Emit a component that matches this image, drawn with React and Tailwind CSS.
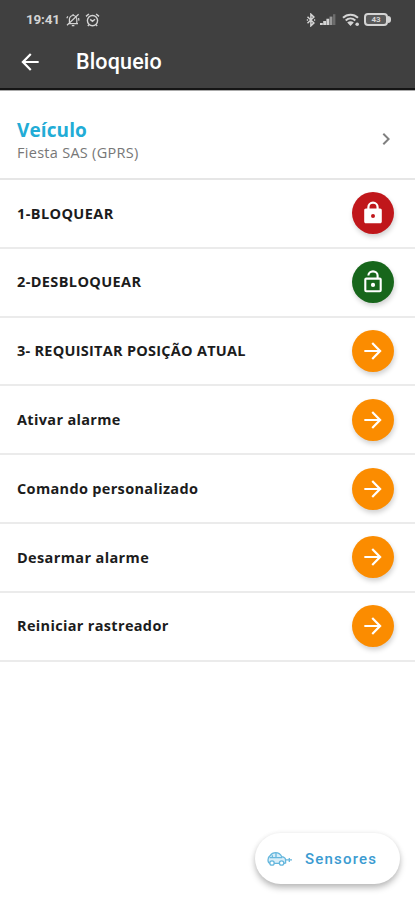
import { MdArrowBack, MdArrowForward, MdChevronRight } from 'react-icons/md'

const COMMANDS = [
  { label: '1-BLOQUEAR', type: 'lock', spacing: 'tracking-[0.4px]' },
  { label: '2-DESBLOQUEAR', type: 'unlock', spacing: 'tracking-[0.38px]' },
  { label: '3- REQUISITAR POSIÇÃO ATUAL', type: 'send', spacing: 'tracking-[0.26px]' },
  { label: 'Ativar alarme', type: 'send', spacing: 'tracking-[0.33px]' },
  { label: 'Comando personalizado', type: 'send', spacing: 'tracking-[0.33px]' },
  { label: 'Desarmar alarme', type: 'send', spacing: 'tracking-[0.37px]' },
  { label: 'Reiniciar rastreador', type: 'send', spacing: 'tracking-[0.33px]' },
]

function LockIcon() {
  return (
    <svg width="26" height="26" viewBox="0 0 26 26" fill="none" stroke="currentColor">
      <path strokeWidth="2.2" d="M8.4 10V7.3a4.6 4.6 0 0 1 9.2 0V10" />
      <path fill="currentColor" stroke="none" fillRule="evenodd" d="M6 8.6h14c1.2 0 1.8.7 1.8 1.8v11c0 1.2-.6 1.8-1.8 1.8H6c-1.2 0-1.8-.6-1.8-1.8v-11c0-1.1.6-1.8 1.8-1.8zM13 14a2 2 0 1 0 0 4 2 2 0 0 0 0-4z" />
    </svg>
  )
}

function UnlockIcon() {
  return (
    <svg width="26" height="26" viewBox="0 0 26 26" fill="none" stroke="currentColor" strokeWidth="2.1">
      <path d="M8.4 6.6a4.6 4.2 0 0 1 9.2 0V10" />
      <rect x="5.3" y="9.6" width="15.4" height="12.6" rx="1" />
      <circle cx="13" cy="15.9" r="2.1" fill="currentColor" stroke="none" />
    </svg>
  )
}

const BUTTONS = {
  lock: { Icon: LockIcon, color: 'bg-[#c0171b]' },
  unlock: { Icon: UnlockIcon, color: 'bg-[#17661b]' },
  send: { Icon: MdArrowForward, color: 'bg-[#fb8c00]' },
}

function StatusBar() {
  return (
    <div className="flex h-[39px] items-center justify-between pl-[26px] pr-[24px] text-[#d4d4d4]">
      <div className="flex items-center">
        <span className="w-[40px] font-[Roboto] text-[13.5px] font-bold leading-none tracking-[-0.2px]">19:41</span>

        {/* Muted bell */}
        <svg width="14" height="14" viewBox="0 0 14 14" fill="none" stroke="currentColor" strokeWidth="1.2">
          <path d="M2.2 10.6H12M3.4 10.4V6.2a3.7 3.7 0 0 1 7.4 0v4.2M7.1 2.4V1M5.8 12.6h2.6M1 12.2 12.6 1.2M.8 5.2l1-1.8M12.9 7.6 12.6 5" />
        </svg>

        {/* Alarm clock */}
        <svg className="ml-[5px]" width="15" height="14" viewBox="0 0 15 14" fill="none" stroke="currentColor" strokeWidth="1.4">
          <circle cx="7.5" cy="7.6" r="5.1" />
          <path d="M1 3.4 3.9 1M14 3.4 11.1 1M5.2 6.4l2.3 2 2.5-2.1M3.9 11.6l-1 1.4M11.1 11.6l1 1.4" />
        </svg>
      </div>

      <div className="flex items-center">
        {/* Bluetooth */}
        <svg width="10" height="14" viewBox="0 0 10 14" fill="none" stroke="currentColor" strokeWidth="1.5">
          <path d="m1.5 3.8 6.4 6.1-3 2.9V1.2l3 2.9-6.4 6.1" />
          <path d="M.8 7h1.3M8 7h1.2" />
        </svg>

        {/* Signal */}
        <svg className="ml-[4px]" width="16" height="13" viewBox="0 0 16 13" fill="currentColor">
          <path d="M0 10h2.8v2H0zM3.2 8H6v4H3.2zM6.4 5.8h2.8V12H6.4z" />
          <path d="M9.6 3.6h2.8V12H9.6z" opacity=".6" />
          <path d="M13 1.2h2.4V12H13z" opacity=".3" />
        </svg>

        {/* Wi-Fi */}
        <svg className="ml-[6px]" width="18" height="14" viewBox="0 0 18 14" fill="none" stroke="currentColor">
          <path strokeWidth="2" d="M1 4.7c4.2-4.1 10.8-4.1 15 0M3.7 7.5c2.8-2.6 6.8-2.6 9.6 0" />
          <path fill="currentColor" stroke="none" d="M5.2 9.4c1.9-1.7 4.7-1.7 6.6 0l-3.3 3.7z" />
          <circle cx="15.2" cy="11.2" r="1.8" fill="currentColor" stroke="none" />
        </svg>

        {/* Battery */}
        <div className="ml-[4px] flex items-center">
          <div className="flex h-[13px] w-[24px] items-center justify-center rounded-[4px] border-2 border-[#d4d4d4] bg-[#5a5a5a] font-[Roboto] text-[8px] font-bold leading-none">
            43
          </div>
          <div className="h-[7px] w-[3px] rounded-r-full bg-[#d4d4d4]" />
        </div>
      </div>
    </div>
  )
}

function CommandRow({ label, type, spacing }) {
  const { Icon, color } = BUTTONS[type]

  return (
    <li className="flex h-[68.8px] items-center justify-between border-b-2 border-[#ebebeb] pl-[17px] pr-[21px]">
      <span className={`text-[14.5px] font-bold text-[#1c1c1c] ${spacing}`}>{label}</span>
      <button className={`flex size-[42px] items-center justify-center rounded-full text-white shadow-[1px_3px_5px_rgba(0,0,0,0.18)] ${color}`}>
        <Icon size={26} />
      </button>
    </li>
  )
}

function CarIcon() {
  return (
    <svg width="26" height="16" viewBox="0 0 26 16" fill="none" stroke="#66b7dd" strokeWidth="1.3">
      <path fill="#d9eef8" d="M3 12.4C1.2 12 1 10.600 1 9c0-2 .7-3.500 2.200-4.400C4.500 2.600 6 1.700 8.600 1.700c3.200 0 4.900 1.500 6.200 4 2.400.4 3.800 1.600 3.800 3.500v2.700l-1.400.4z" />
      <path d="M2.600 6.600h12.600M9 1.900v4.700M5.400 4.200v2.400" />
      <circle cx="5" cy="12" r="2.200" fill="white" />
      <circle cx="14.600" cy="12" r="2.200" fill="white" />
      <path d="M19 8.900h6M22.300 6.900v4" />
    </svg>
  )
}

export default function App() {
  return (
    <div className="flex h-[900px] w-full flex-col overflow-hidden bg-white font-['Open_Sans',sans-serif]">
      <header className="h-[90px] shrink-0 border-b-2 border-[#151515] bg-[#404040]">
        <StatusBar />
        <div className="flex h-[45px] items-center pl-[17px] text-white">
          <MdArrowBack size={26} />
          <h1 className="ml-[33px] pt-px font-[Roboto] text-[21.5px] font-medium leading-none tracking-[0.15px]">Bloqueio</h1>
        </div>
      </header>

      <main className="flex-1 border-t border-[#aaaaaa]">
        {/* Selected vehicle */}
        <div className="flex h-[89px] items-center justify-between border-b-2 border-[#e6e6e6] pl-[17px] pr-[17px]">
          <div className="flex flex-col pt-[12px]">
            <span className="text-[19px] font-bold leading-[24px] tracking-[0.1px] text-[#22acd6]">Veículo</span>
            <span className="text-[14.5px] leading-[22px] tracking-[0.28px] text-[#777777]">Fiesta SAS (GPRS)</span>
          </div>
          <MdChevronRight size={24} className="mt-[8px] text-[#808080]" />
        </div>

        <ul>
          {COMMANDS.map(c => (
            <CommandRow key={c.label} {...c} />
          ))}
        </ul>
      </main>

      <footer className="flex shrink-0 justify-end pb-[16px] pr-[15px]">
        <button className="flex h-[51px] w-[145px] items-center rounded-full bg-white pl-[12px] shadow-[0_4px_6px_rgba(0,0,0,0.25),0_0_5px_rgba(0,0,0,0.06)]">
          <CarIcon />
          <span className="ml-[12px] pt-px font-[Roboto] text-[15px] font-medium tracking-[1.2px] text-[#3b9bd1]">Sensores</span>
        </button>
      </footer>
    </div>
  )
}
